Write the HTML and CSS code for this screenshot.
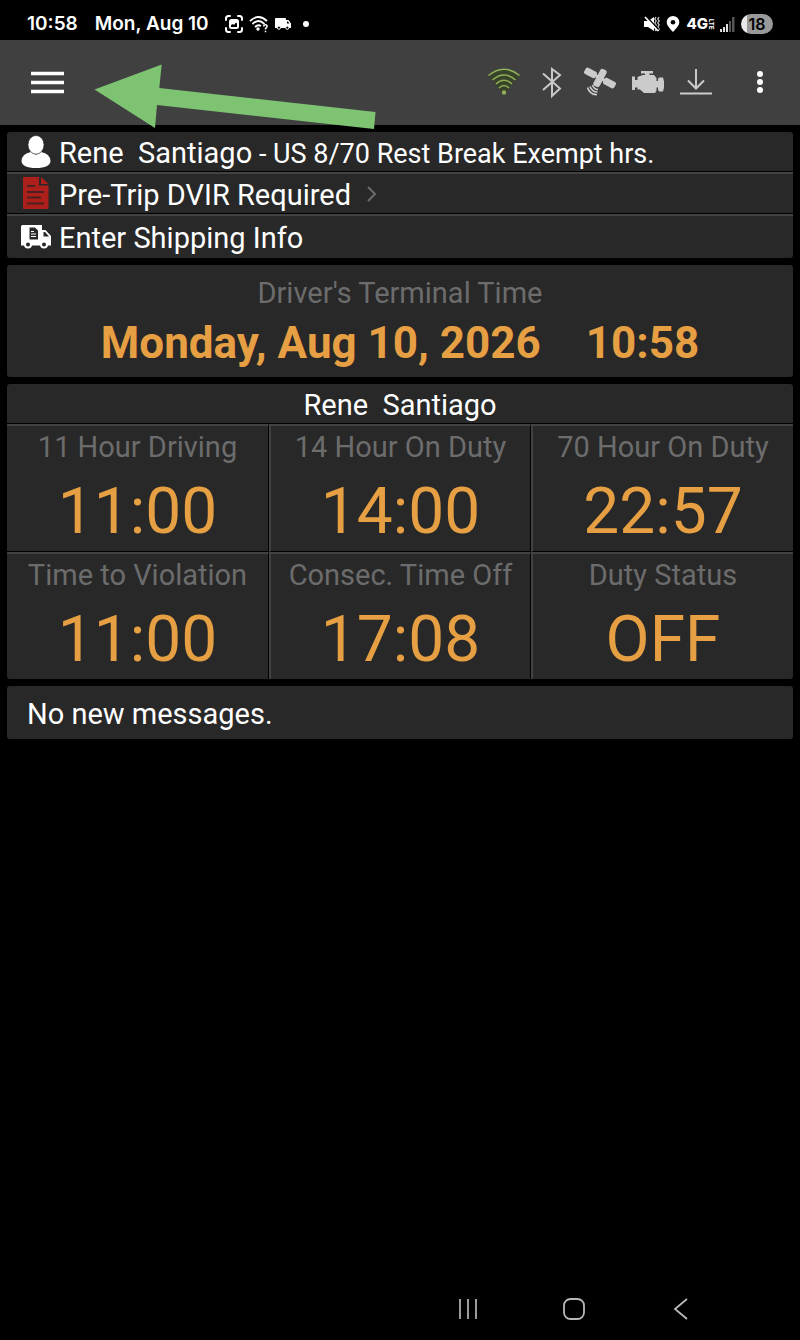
FILE: index.html
```html
<!DOCTYPE html>
<html lang="en">

<head>
    <meta charset="UTF-8">
    <meta name="viewport" content="width=device-width, initial-scale=1.0">
    <title>Driver Log</title>
    <link rel="stylesheet" href="styles.css">
</head>

<body>
    <!--Phone status bar-->
    <div class="status-bar">
        <span class="clock">10:58</span>
        <span class="date">Mon, Aug 10</span>
        <div class="status-icons">
            <svg width="18" height="18" viewBox="0 0 18 18" fill="none" stroke="#fff" stroke-width="2" stroke-linecap="round">
                <path d="M1 5V3.500Q1 1 3.500 1H5M13 1h1.500Q17 1 17 3.500V5M17 13v1.500Q17 17 14.500 17H13M5 17H3.500Q1 17 1 14.500V13" />
                <rect x="4" y="4" width="10" height="10" rx="2.500" fill="#fff" stroke="none" />
                <path d="M6 12v-2l2-1 1 1 2-2.500 1 1V12z" fill="#000" stroke="none" />
            </svg>
            <svg width="20" height="18" viewBox="0 0 20 18" fill="none" stroke="#fff" stroke-width="1.800">
                <path d="M1 6Q9.500 -2 18 6M3.500 9Q9.500 3 15.500 9M6 12Q9 9 12 11" />
                <circle cx="9" cy="14" r="1.700" fill="#fff" stroke="none" />
                <path d="M14.500 11.500Q15 9.700 16.500 9.800Q18.200 10 18 11.500Q17.800 12.600 16.500 13.500V14.500M16.500 15.800V17.200" stroke-width="1.500" />
            </svg>
            <svg width="16" height="12" viewBox="0 0 16 12">
                <path d="M1 0h9q1 0 1 1v1h2.500L16 5.500V10h-1.300H0V1q0-1 1-1z" fill="#fff" />
                <path d="M12 3.500h1l1.300 2H12z" fill="#000" />
                <circle cx="3.900" cy="9.700" r="1.600" fill="#000" stroke="#fff" />
                <circle cx="12.300" cy="9.700" r="1.600" fill="#000" stroke="#fff" />
            </svg>
            <span class="dot"></span>
        </div>
        <div class="status-right">
            <svg width="16" height="16" viewBox="0 0 16 16">
                <path d="M0 5h4l6-4v14l-6-4H0z" fill="#fff" />
                <path d="M12 1l-1.200 2 1.400 2-1.400 2 1.400 2-1.400 2 1.400 2-1 2M15 1l-1.200 2 1.400 2-1.400 2 1.400 2-1.400 2 1.400 2-1 2" fill="none" stroke="#ccc" stroke-width="1.300" />
                <path d="M2.500 .5l12 13" stroke="#000" stroke-width="1.500" />
                <path d="M1 1l13 14" stroke="#fff" stroke-width="1.800" />
            </svg>
            <svg width="14" height="16" viewBox="0 0 14 16">
                <path d="M7 0a6.300 6.300 0 0 1 6.300 6.300C13.300 10 9 13.500 7 16C5 13.500.7 10 .7 6.300A6.300 6.300 0 0 1 7 0z" fill="#fff" />
                <circle cx="7" cy="6.300" r="2.300" fill="#000" />
            </svg>
            <span class="network">4G<small>LTE</small></span>
            <svg width="15" height="15" viewBox="0 0 15 15">
                <path d="M0 12h2v3H0zM3 10h2v5H3zM6 7h2v8H6z" fill="#ddd" />
                <path d="M9 4h2v11H9zM12 0h2.500v15H12z" fill="#555" />
            </svg>
            <span class="battery">18</span>
        </div>
    </div>

    <header class="toolbar">
        <button type="button" class="icon-button" aria-label="Menu">
            <svg width="34" height="24" viewBox="0 0 34 24">
                <path d="M0 2.500h33M0 11.500h33M0 20.500h33" stroke="#fff" stroke-width="3.400" />
            </svg>
        </button>
        <div class="tools">
            <svg width="32" height="32" viewBox="0 0 32 32" fill="none" stroke="#8fae58" stroke-width="1.600">
                <path d="M0 8Q16 -4.500 32 8L16 27z" fill="#37442a" stroke="none" />
                <path d="M.5 8.500Q16 -4 31.500 8.500M4.500 13Q16 3 27.500 13M8 17Q16 9.500 24 17M11 21Q16 16 21 21" />
                <circle cx="16" cy="25.500" r="2.200" fill="#8fae58" stroke="none" />
            </svg>
            <svg width="32" height="32" viewBox="0 0 32 32" fill="none" stroke="#c8c8c8" stroke-width="2">
                <path d="M7 6.500l17 15L16 29V2l8 6L7 23" />
            </svg>
            <svg width="32" height="32" viewBox="0 0 32 32" fill="#cbcbcb">
                <g transform="rotate(28 16 11)">
                    <rect x="-1" y="7.500" width="12.500" height="7" rx="2" />
                    <rect x="20.500" y="7.500" width="12.500" height="7" rx="2" />
                    <rect x="12.500" y="1.500" width="7" height="19" rx="2.500" />
                    <path d="M10 9.500h12v3H10z" />
                </g>
                <path d="M8.500 18Q10 22.500 14 22.500M6 19.500Q8 25 13.500 25M3.500 20.500Q6 28 13 27.500" fill="none" stroke="#cbcbcb" stroke-width="1.700" />
            </svg>
            <svg width="32" height="32" viewBox="0 0 32 32" fill="#cbcbcb">
                <path d="M9 4h12v2.500h-3.500V8H22l2.500 3v3H26V12l1-1.500h4l1 4v6l-1 4h-4l-1-2v-2h-1.500v3L23 26H12l-4-3.500H5.500V20.500H3V23H0V9.500h3V13h2.500V10l5-2H13V6.500H9z" />
            </svg>
            <svg width="32" height="32" viewBox="0 0 32 32" fill="none" stroke="#cbcbcb" stroke-width="2">
                <path d="M16 2v19M8 13.500l8 8 8-8M0 26.500h32" />
            </svg>
        </div>
        <button type="button" class="icon-button" aria-label="More options">
            <svg width="8" height="24" viewBox="0 0 8 24" fill="#fff">
                <circle cx="4" cy="3" r="3" />
                <circle cx="4" cy="11" r="3" />
                <circle cx="4" cy="19" r="3" />
            </svg>
        </button>
        <!--Pointer to the menu button-->
        <svg class="arrow" width="282" height="66" viewBox="0 0 282 66">
            <path d="M0.500 25.500L67.700 0.500L65.300 24L281.500 48L280 65L63 41L61 64z" fill="#7dc371" />
        </svg>
    </header>

    <main>
        <section class="panel">
            <button type="button" class="row">
                <svg class="row-icon" width="30" height="38" viewBox="0 -1 30 38" fill="#fff">
                    <path d="M10 16Q1 17.500.5 25Q1 32 15 32T29.500 25Q29 17.500 20 16Q15 21 10 16z" />
                    <ellipse cx="15" cy="8.800" rx="8" ry="9.300" stroke="#282828" stroke-width=".6" />
                </svg>
                <span>Rene&nbsp; Santiago<span class="ruleset"> - US 8/70 Rest Break Exempt hrs.</span></span>
            </button>
            <button type="button" class="row">
                <svg class="row-icon" width="30" height="36" viewBox="0 0 30 36">
                    <path d="M2 0h16v8.500h9.500V31q0 1-1 1H3q-1 0-1-1zM20 0l7.500 7H20z" fill="#ad1f1b" />
                    <path d="M6 9h8M6 15h17M6 20.500h14M6 26.500h17" stroke="#4a2020" stroke-width="2" />
                </svg>
                <span>Pre-Trip DVIR Required</span>
                <svg class="chevron" width="12" height="18" viewBox="0 0 12 18" fill="none" stroke="#6c6c6c" stroke-width="2">
                    <path d="M2 1l7 7-7 7" />
                </svg>
            </button>
            <button type="button" class="row">
                <svg class="row-icon" width="30" height="26" viewBox="0 0 30 26">
                    <path d="M1.500 0H21v5h3.500l5.500 6v7.500h.5v2H0V1.500Q0 0 1.500 0z" fill="#fff" />
                    <path d="M8.500 2.500h5.500l3 3v9h-8.500zM22.500 7h1.500l4 4.500h-5.500z" fill="#282828" />
                    <path d="M10 6.500h3M10 9h5M10 11.500h5" stroke="#fff" stroke-width="1.200" />
                    <circle cx="7" cy="19.500" r="3" fill="#282828" stroke="#fff" stroke-width="2" />
                    <circle cx="23" cy="19.500" r="3" fill="#282828" stroke="#fff" stroke-width="2" />
                </svg>
                <span>Enter Shipping Info</span>
            </button>
        </section>

        <section class="panel terminal">
            <div class="label">Driver's Terminal Time</div>
            <div class="terminal-time">
                <span>Monday, Aug 10, 2026</span>
                <span>10:58</span>
            </div>
        </section>

        <section class="panel">
            <h1 class="driver">Rene&nbsp; Santiago</h1>
            <div class="hours">
                <div class="cell">
                    <div class="label">11 Hour Driving</div>
                    <div class="value">11:00</div>
                </div>
                <div class="cell">
                    <div class="label">14 Hour On Duty</div>
                    <div class="value">14:00</div>
                </div>
                <div class="cell">
                    <div class="label">70 Hour On Duty</div>
                    <div class="value">22:57</div>
                </div>
                <div class="cell">
                    <div class="label">Time to Violation</div>
                    <div class="value">11:00</div>
                </div>
                <div class="cell">
                    <div class="label">Consec. Time Off</div>
                    <div class="value">17:08</div>
                </div>
                <div class="cell">
                    <div class="label">Duty Status</div>
                    <div class="value">OFF</div>
                </div>
            </div>
        </section>

        <section class="panel messages">No new messages.</section>
    </main>

    <!--System navigation-->
    <nav class="nav-bar">
        <button type="button" class="icon-button" aria-label="Recent apps">
            <svg width="22" height="22" viewBox="0 0 22 22" stroke="#aaa" stroke-width="1.800">
                <path d="M3 1v20M11 1v20M19 1v20" />
            </svg>
        </button>
        <button type="button" class="icon-button" aria-label="Home">
            <svg width="22" height="22" viewBox="0 0 22 22" fill="none" stroke="#b8b8b8" stroke-width="1.800">
                <rect x="1" y="1" width="20" height="20" rx="6.500" />
            </svg>
        </button>
        <button type="button" class="icon-button" aria-label="Back">
            <svg width="22" height="22" viewBox="0 0 22 22" fill="none" stroke="#b8b8b8" stroke-width="1.800">
                <path d="M18 1L6 11l12 10" />
            </svg>
        </button>
    </nav>
</body>

</html>
```
FILE: styles.css
```css
* {
    box-sizing: border-box;
}

body {
    background-color: #000;
    color: #fff;
    display: flex;
    flex-direction: column;
    font-family: Roboto, "Liberation Sans", sans-serif;
    font-size: 29px;
    line-height: 34px;
    margin: 0;
    min-height: 100vh;
}

svg {
    display: block;
    flex: none;
}

button {
    background: none;
    border: 0;
    color: inherit;
    cursor: pointer;
    font: inherit;
    margin: 0;
    padding: 0;
}

.status-bar {
    align-items: center;
    display: flex;
    font-family: Inter, Roboto, sans-serif;
    font-size: 19px;
    font-weight: 600;
    height: 40px;
    line-height: 24px;
    padding: 8px 27px 0;
}

.date {
    margin-left: 17px;
}

.status-icons {
    align-items: center;
    display: flex;
    gap: 6px;
    margin-left: 16px;
}

.dot {
    background-color: #fff;
    border-radius: 50%;
    height: 6px;
    margin-left: 6px;
    width: 6px;
}

.status-right {
    align-items: center;
    display: flex;
    gap: 6px;
    margin-left: auto;
}

.network {
    display: flex;
    font-size: 15px;
    font-weight: 800;
    line-height: 16px;
}

/*stacked on its side next to the 4G*/
.network small {
    font-size: 6px;
    line-height: 6px;
    text-align: center;
    writing-mode: vertical-rl;
}

.battery {
    background: linear-gradient(90deg, #e8e8e8 18%, #999 18%);
    border-radius: 10px;
    color: #000;
    font-size: 16px;
    line-height: 20px;
    text-align: center;
    width: 32px;
}

.toolbar {
    align-items: center;
    background-color: #404040;
    display: flex;
    height: 85px;
    padding: 0 36px 0 31px;
    position: relative;
}

.tools {
    display: flex;
    gap: 16px;
    margin-left: auto;
    margin-right: 44px;
}

/*lies over the toolbar and the panel gap*/
.arrow {
    left: 94px;
    pointer-events: none;
    position: absolute;
    top: 24px;
}

main {
    display: flex;
    flex: 1;
    flex-direction: column;
    gap: 7px;
    padding: 7px;
}

.panel {
    background-color: #282828;
    border-radius: 3px;
    overflow: hidden;
}

.row {
    align-items: center;
    border-bottom: 1px solid #000;
    border-top: 2px solid #424242;
    display: flex;
    height: 42px;
    padding: 2px 14px 0;
    text-align: left;
    width: 100%;
}

.row:first-child {
    border-top: 0;
    height: 40px;
    padding-top: 4px;
}

.row:last-child {
    border-bottom: 0;
    height: 44px;
}

.row-icon {
    margin-right: 8px;
}

.ruleset {
    font-size: 27px;
}

.chevron {
    margin-left: 15px;
}

.label {
    color: #6c6c6c;
}

.terminal {
    padding: 11px 0 1px;
    text-align: center;
}

.terminal-time {
    color: #e69f42;
    display: flex;
    font-size: 44px;
    font-weight: 700;
    gap: 45px;
    justify-content: center;
    line-height: 66px;
}

.driver {
    border-bottom: 1px solid #000;
    font-size: 29px;
    font-weight: 400;
    height: 40px;
    line-height: 42px;
    margin: 0;
    text-align: center;
}

.hours {
    display: grid;
    grid-template-columns: repeat(3, 1fr);
    text-align: center;
}

.cell {
    border-bottom: 1px solid #000;
    border-left: 2px solid #424242;
    border-right: 1px solid #000;
    border-top: 2px solid #424242;
    height: 128px;
    padding-top: 4px;
}

.cell:nth-child(3n + 1) {
    border-left: 0;
}

.cell:nth-child(3n) {
    border-right: 0;
}

.cell:nth-child(n + 4) {
    border-bottom: 0;
    height: 127px;
}

.value {
    color: #e69f42;
    font-size: 64px;
    line-height: 96px;
}

.messages {
    line-height: 50px;
    padding: 3px 20px 0;
}

.nav-bar {
    display: flex;
    gap: 84px;
    justify-content: flex-end;
    padding: 21px 109px 20px;
}
```
